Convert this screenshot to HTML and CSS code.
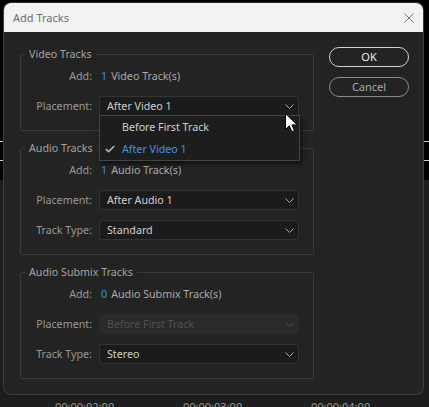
FILE: index.html
```html
<!DOCTYPE html>
<html lang="en">
<head>
<meta charset="utf-8">
<title>Add Tracks</title>
<link rel="stylesheet" href="styles.css">
</head>
<body>
<div class="dialog">
  <div class="titlebar">
    <span class="title">Add Tracks</span>
    <svg class="close" width="10" height="10" viewBox="0 0 10 10"><path d="M0.5 0.5 L9.5 9.5 M9.5 0.5 L0.5 9.5" stroke="#7a7a7a" stroke-width="1" fill="none"/></svg>
  </div>
  <div class="content">
    <div class="groups">
      <fieldset class="group">
        <legend>Video Tracks</legend>
        <div class="row">
          <span class="label">Add:</span>
          <span class="value"><span class="num">1</span>Video Track(s)</span>
        </div>
        <div class="row">
          <span class="label">Placement:</span>
          <div class="select open">
            <span>After Video 1</span>
            <svg class="chev" width="9" height="5" viewBox="0 0 9 5"><path d="M0.5 0.5 L4.5 4.5 L8.5 0.5" stroke="#a8a8a8" fill="none"/></svg>
            <div class="menu">
              <div class="item">Before First Track</div>
              <div class="item selected">
                <svg class="check" width="10" height="8" viewBox="0 0 10 8"><path d="M0.8 4 L3.6 6.8 L9.2 1" stroke="#bdbdbd" stroke-width="1.5" fill="none"/></svg>
                After Video 1
              </div>
            </div>
          </div>
        </div>
      </fieldset>
      <fieldset class="group">
        <legend>Audio Tracks</legend>
        <div class="row">
          <span class="label">Add:</span>
          <span class="value"><span class="num">1</span>Audio Track(s)</span>
        </div>
        <div class="row">
          <span class="label">Placement:</span>
          <div class="select">
            <span>After Audio 1</span>
            <svg class="chev" width="9" height="5" viewBox="0 0 9 5"><path d="M0.5 0.5 L4.5 4.5 L8.5 0.5" stroke="#a8a8a8" fill="none"/></svg>
          </div>
        </div>
        <div class="row">
          <span class="label">Track Type:</span>
          <div class="select">
            <span>Standard</span>
            <svg class="chev" width="9" height="5" viewBox="0 0 9 5"><path d="M0.5 0.5 L4.5 4.5 L8.5 0.5" stroke="#a8a8a8" fill="none"/></svg>
          </div>
        </div>
      </fieldset>
      <fieldset class="group">
        <legend>Audio Submix Tracks</legend>
        <div class="row">
          <span class="label">Add:</span>
          <span class="value"><span class="num">0</span>Audio Submix Track(s)</span>
        </div>
        <div class="row">
          <span class="label">Placement:</span>
          <div class="select disabled">
            <span>Before First Track</span>
            <svg class="chev" width="9" height="5" viewBox="0 0 9 5"><path d="M0.5 0.5 L4.5 4.5 L8.5 0.5" stroke="#484848" fill="none"/></svg>
          </div>
        </div>
        <div class="row">
          <span class="label">Track Type:</span>
          <div class="select">
            <span>Stereo</span>
            <svg class="chev" width="9" height="5" viewBox="0 0 9 5"><path d="M0.5 0.5 L4.5 4.5 L8.5 0.5" stroke="#a8a8a8" fill="none"/></svg>
          </div>
        </div>
      </fieldset>
    </div>
    <div class="buttons">
      <div class="btn primary">OK</div>
      <div class="btn">Cancel</div>
    </div>
  </div>
</div>
<div class="timeline">
  <span>00;00;02;00</span>
  <span>00;00;03;00</span>
  <span>00;00;04;00</span>
</div>
<svg class="cursor" width="14" height="20" viewBox="0 0 14 20"><path d="M0.5 0.5 L0.5 16.5 L4.3 12.8 L6.9 18.8 L9.4 17.7 L6.9 11.9 L12.2 11.9 Z" fill="#ffffff" stroke="#000000" stroke-width="1" stroke-linejoin="miter"/></svg>
</body>
</html>
```
FILE: styles.css
```css
* { box-sizing: border-box; }
html, body { margin: 0; padding: 0; }
body {
  position: relative;
  width: 429px;
  height: 407px;
  overflow: hidden;
  font-family: "Noto Sans", "Open Sans", sans-serif;
  font-size: 10.7px;
  background: linear-gradient(to bottom,
    #000 0, #000 141px, #cfcfcf 141px, #cfcfcf 142px,
    #000 142px, #000 160px, #cfcfcf 160px, #cfcfcf 161px,
    #000 161px, #000 180px, #1d1d1d 180px, #1d1d1d 100%);
  padding-top: 2px;
}
.dialog {
  margin-left: 3px;
  width: 421px;
  background: #232323;
  border: 1px solid #3c3c3c;
  border-top-color: #2a2a2a;
  border-radius: 8px;
  overflow: hidden;
}
.titlebar {
  height: 29px;
  background: #f2f2f2;
  display: flex;
  align-items: center;
  justify-content: space-between;
  padding: 0 9px 0 9px;
}
.title {
  color: #6c6c6c;
  font-size: 11px;
  line-height: 14px;
  padding-top: 1px;
}
.close { display: block; margin-top: 1px; }
.content {
  display: flex;
  gap: 15px;
  padding: 15px 14px 15px 16px;
}
.groups {
  display: flex;
  flex-direction: column;
  gap: 10px;
  width: 294px;
}
.group {
  margin: 0;
  padding: 5px 0 14px 0;
  border: 1px solid #393939;
  border-radius: 2px;
  min-width: 0;
  display: flex;
  flex-direction: column;
  gap: 10px;
}
.group legend {
  margin-left: 4px;
  padding: 0 4px;
  line-height: 14px;
  color: #a2a2a2;
}
.row {
  display: grid;
  grid-template-columns: 71px 200px;
  column-gap: 7px;
  align-items: center;
  height: 20px;
}
.label {
  text-align: right;
  color: #999999;
  line-height: 14px;
}
.value {
  color: #a9a9a9;
  padding-left: 2px;
  line-height: 14px;
  white-space: nowrap;
}
.num {
  color: #3a8ee6;
  margin-right: 4px;
}
.select {
  position: relative;
  height: 20px;
  background: #1b1b1b;
  border: 1px solid #343434;
  border-radius: 3px;
  color: #d0d0d0;
  display: flex;
  align-items: center;
  justify-content: space-between;
  padding: 0 4px 0 7px;
  line-height: 14px;
}
.select.disabled {
  background: #2a2a2a;
  border-color: #2a2a2a;
  color: #4f4f4f;
}
.chev { display: block; }
.menu {
  position: absolute;
  top: 18px;
  left: -1px;
  width: 201px;
  background: #1d1d1d;
  border: 1px solid #444444;
  box-shadow: 2px 3px 4px rgba(0, 0, 0, 0.55);
  z-index: 5;
}
.item {
  position: relative;
  height: 22px;
  display: flex;
  align-items: center;
  padding-left: 22px;
  color: #cfcfcf;
  line-height: 14px;
}
.item.selected { color: #3d94ee; }
.check {
  position: absolute;
  left: 5px;
  top: 7px;
}
.buttons {
  display: flex;
  flex-direction: column;
  gap: 10px;
  width: 80px;
}
.btn {
  height: 20px;
  border: 1.5px solid #8a8a8a;
  border-radius: 10px;
  display: flex;
  align-items: center;
  justify-content: center;
  color: #a8a8a8;
  font-size: 11px;
  line-height: 14px;
}
.btn.primary {
  border-color: #d2d2d2;
  color: #ececec;
}
.timeline {
  display: flex;
  padding-left: 55px;
  margin-top: 5px;
  color: #9a9a9a;
  font-size: 11px;
  line-height: 14px;
}
.timeline span { width: 128px; flex: none; }
.cursor {
  position: absolute;
  left: 285px;
  top: 113px;
  z-index: 10;
}
```
